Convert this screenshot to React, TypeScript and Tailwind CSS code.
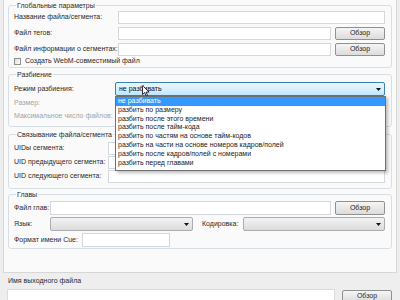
import React from "react";

const Input = ({ className = "" }: { className?: string }) => (
  <div className={`h-full border border-[#d3d8de] bg-white ${className}`} />
);

const Browse = () => (
  <div className="ml-[4px] flex h-full w-[50px] items-center justify-center rounded-[2px] border border-[#8f9090] bg-linear-to-b from-[#f5f5f5] to-[#dcdcdc] text-[7px] text-[#222]">
    Обзор
  </div>
);

const Arrow = () => (
  <svg width="5" height="3" viewBox="0 0 5 3" className="ml-auto mr-[3px]">
    <path d="M0 0h5L2.5 3z" fill="#111" />
  </svg>
);

const Combo = ({ className = "" }: { className?: string }) => (
  <div className={`flex h-full items-center rounded-[2px] border border-[#acacac] bg-linear-to-b from-[#f3f3f3] to-[#dcdcdc] ${className}`}>
    <Arrow />
  </div>
);

const Group = ({ title, className = "", children }: { title: string; className?: string; children: React.ReactNode }) => (
  <fieldset className={`mx-[4px] rounded-[3px] border border-[#d8dfe4] pl-[5px] pr-[6px] ${className}`}>
    <legend className="ml-[2px] px-[1px] text-[7px] leading-[9px] text-[#2a2a2a]">{title}</legend>
    {children}
  </fieldset>
);

const items = [
  "не разбивать",
  "разбить по размеру",
  "разбить после этого времени",
  "разбить после тайм-кода",
  "разбить по частям на основе тайм-кодов",
  "разбить на части на основе номеров кадров/полей",
  "разбить после кадров/полей с номерами",
  "разбить перед главами",
];

export default function App() {
  return (
    <div className="h-[300px] w-[400px] overflow-hidden bg-[#eeeeee] font-['Liberation_Sans',Arial,sans-serif] text-[7px] text-[#2a2a2a]">
      <div className="mx-[3px] flex h-[273px] flex-col border-x border-b border-[#d6d6d6] bg-[#fafafa] pt-[1px]">
        <Group title="Глобальные параметры">
          <div className="mt-[1px] flex h-[13px] items-center">
            <span className="w-[104px] shrink-0">Название файла/сегмента:</span>
            <Input className="flex-1" />
          </div>
          <div className="mt-[3px] flex h-[13px] items-center">
            <span className="w-[104px] shrink-0">Файл тегов:</span>
            <Input className="flex-1" />
            <Browse />
          </div>
          <div className="mt-[3px] flex h-[13px] items-center">
            <span className="w-[104px] shrink-0">Файл информации о сегментах:</span>
            <Input className="flex-1" />
            <Browse />
          </div>
          <div className="flex h-[11px] items-center">
            <span className="h-[7px] w-[7px] border border-[#8e8f8f] bg-linear-to-br from-[#dcdcdc] to-white" />
            <span className="ml-[4px]">Создать WebM-совместимый файл</span>
          </div>
        </Group>

        <Group title="Разбиение" className="mt-[2px]">
          <div className="mt-[3px] flex h-[14px] items-center">
            <span className="w-[101px] shrink-0">Режим разбиения:</span>
            <div className="relative h-full flex-1">
              <div className="flex h-full items-center rounded-[2px] border border-[#3c7fb1] bg-linear-to-b from-[#eaf6fd] via-[#d9f0fc] to-[#bee6fd] pl-[3px]">
                <span className="text-[#111]">не разбивать</span>
                <Arrow />
              </div>
              <svg width="8" height="12" viewBox="0 0 8 12" className="absolute left-[27px] top-[3px]">
                <path d="M0.5 0.5v9l2.2-2 1.6 3.6 1.4-.6-1.6-3.4h3z" fill="#fff" stroke="#000" strokeWidth="0.8" />
                <circle cx="1" cy="0.8" r="1" fill="#e06070" />
              </svg>
              <div className="absolute left-0 top-full z-10 w-[271px] border border-[#707070] bg-white pb-[3px] shadow-[2px_2px_3px_rgba(0,0,0,0.25)]">
                {items.map((t, i) => (
                  <div
                    key={t}
                    className={i === 0 ? "h-[8.8px] bg-[#3399ff] pl-[2px] leading-[8.8px] text-white" : "h-[8.8px] pl-[2px] leading-[8.8px] text-[#222]"}
                  >
                    {t}
                  </div>
                ))}
              </div>
            </div>
          </div>
          <div className="mt-[1px] flex h-[13px] items-center text-[#a3a3a3]">Размер:</div>
          <div className="mb-[3px] flex h-[13px] items-center text-[#a3a3a3]">Максимальное число файлов:</div>
        </Group>

        <Group title="Связывание файла/сегмента" className="mt-[3px]">
          <div className="mt-[3px] flex h-[13px] items-center">
            <span className="w-[94px] shrink-0">UIDы сегмента:</span>
            <Input className="flex-1" />
          </div>
          <div className="mt-[1px] flex h-[13px] items-center">
            <span className="w-[94px] shrink-0">UID предыдущего сегмента:</span>
            <Input className="flex-1" />
          </div>
          <div className="mb-[5px] mt-[1px] flex h-[13px] items-center">
            <span className="w-[94px] shrink-0">UID следующего сегмента:</span>
            <Input className="flex-1" />
          </div>
        </Group>

        <Group title="Главы" className="mt-[1px]">
          <div className="mt-[2px] flex h-[14px] items-center">
            <span className="w-[36px] shrink-0">Файл глав:</span>
            <Input className="flex-1" />
            <Browse />
          </div>
          <div className="mt-[2px] flex h-[14px] items-center">
            <span className="w-[36px] shrink-0">Язык:</span>
            <Combo className="w-[143px]" />
            <span className="ml-[9px] w-[41px] shrink-0">Кодировка:</span>
            <Combo className="flex-1" />
          </div>
          <div className="mb-[1px] mt-[2px] flex h-[14px] items-center">
            <span className="w-[68px] shrink-0">Формат имени Cue:</span>
            <Input className="w-[88px]" />
          </div>
        </Group>
      </div>

      <div className="pl-[8px] pt-[3px] text-[7px] leading-[9px]">Имя выходного файла</div>
      <div className="mt-[4px] flex h-[14px] pl-[7px] pr-[8px]">
        <div className="h-[20px] w-[328px] border border-[#dcdcdc] bg-white" />
        <div className="ml-[7px] flex h-[13px] w-[50px] items-center justify-center self-end rounded-[2px] border border-[#8f9090] bg-linear-to-b from-[#f5f5f5] to-[#dcdcdc]">
          Обзор
        </div>
      </div>
    </div>
  );
}
